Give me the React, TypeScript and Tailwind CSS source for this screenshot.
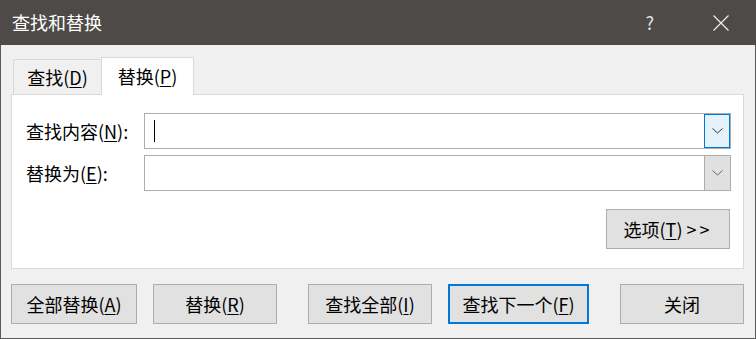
import React from "react";

const font = { fontFamily: '"Noto Sans CJK SC", "Noto Sans", sans-serif' };

const Chevron = ({ color }: { color: string }) => (
    <svg width="11" height="6" viewBox="0 0 11 6">
        <path d="M0.5 0.5 L5.5 5 L10.5 0.5" fill="none" stroke={color} strokeWidth="1" />
    </svg>
);

const Combo = ({ focused, cursor }: { focused?: boolean; cursor?: boolean }) => (
    <div className="flex flex-1 h-[36px] border border-[#adadad] bg-white">
        <div className="flex-1 flex items-center pl-[9px]">
            {cursor && <div className="w-px h-[22px] bg-black" />}
        </div>
        {focused ? (
            <div className="w-[26px] h-full border border-[#0078d7] bg-[#e5f1fb] flex items-center justify-center">
                <Chevron color="#333" />
            </div>
        ) : (
            <div className="w-[26px] h-full border-l border-[#adadad] bg-[#e0e0e0] flex items-center justify-center">
                <Chevron color="#666" />
            </div>
        )}
    </div>
);

const Btn = ({ children, className, primary }: { children: React.ReactNode; className?: string; primary?: boolean }) => (
    <div
        className={
            "h-[40px] flex items-center justify-center bg-[#e1e1e1] text-[18px] text-black " +
            (primary ? "border-2 border-[#0078d7] " : "border border-[#adadad] ") +
            (className ?? "")
        }
    >
        {children}
    </div>
);

const U = ({ children }: { children: React.ReactNode }) => <span className="underline underline-offset-2">{children}</span>;

export default function App() {
    return (
        <div style={font} className="w-[756px] h-[339px] flex flex-col bg-[#f0f0f0] border-x border-b border-[#5a5a5a]">
            <div className="h-[45px] -mx-px bg-[#4d4a48] flex items-center text-white">
                <span className="ml-[12px] text-[18px] flex-1">查找和替换</span>
                <span className="text-[18px] text-[#e0e0e0] mr-[59px]">?</span>
                <svg width="16" height="16" viewBox="0 0 16 16" className="mr-[27px]">
                    <path d="M0.5 0.5 L15.5 15.5 M15.5 0.5 L0.5 15.5" stroke="#f0f0f0" strokeWidth="1.2" />
                </svg>
            </div>

            <div className="flex-1 flex flex-col pl-[10px] pr-[11px]">
                <div className="mt-[12px] h-[37px] flex items-end pl-[2px] relative z-10">
                    <div className="h-[35px] w-[88px] border-t border-l border-[#d9d9d9] flex items-center justify-center text-[18px]">
                        查找(<U>D</U>)
                    </div>
                    <div className="h-[38px] w-[93px] -mb-px border-x border-t border-[#d9d9d9] bg-white flex items-center justify-center text-[18px]">
                        替换(<U>P</U>)
                    </div>
                </div>

                <div className="h-[175px] border border-[#d9d9d9] bg-white flex flex-col pt-[18px] pl-[14px] pr-[12px] text-[18px]">
                    <div className="flex items-center">
                        <div className="w-[118px]">查找内容(<U>N</U>):</div>
                        <Combo focused cursor />
                    </div>
                    <div className="flex items-center mt-[6px]">
                        <div className="w-[118px]">替换为(<U>E</U>):</div>
                        <Combo />
                    </div>
                    <div className="flex justify-end mt-[18px] mr-[1px]">
                        <Btn className="w-[124px]">
                            选项(<U>T</U>)&nbsp;<span className="tracking-[3px]">&gt;&gt;</span>
                        </Btn>
                    </div>
                </div>

                <div className="flex mt-[15px]">
                    <Btn className="w-[126px]">全部替换(<U>A</U>)</Btn>
                    <Btn className="w-[124px] ml-[16px]">替换(<U>R</U>)</Btn>
                    <Btn className="w-[124px] ml-[31px]">查找全部(<U>I</U>)</Btn>
                    <Btn primary className="w-[141px] ml-[16px]">查找下一个(<U>F</U>)</Btn>
                    <Btn className="w-[124px] ml-[31px]">关闭</Btn>
                </div>
            </div>
        </div>
    );
}
